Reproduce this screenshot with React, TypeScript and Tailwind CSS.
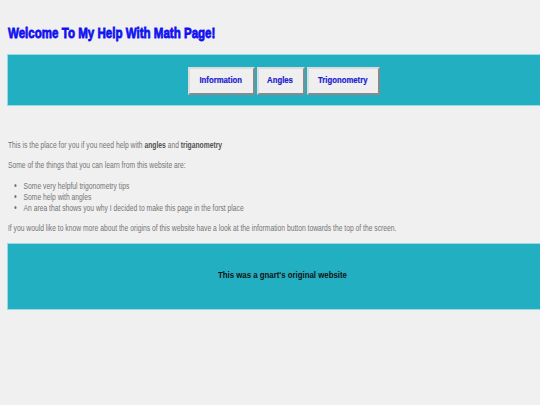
import React from 'react';

const navItems = [
  { label: 'Information', width: 'w-[67px]' },
  { label: 'Angles', width: 'w-[48px]' },
  { label: 'Trigonometry', width: 'w-[73px]' },
];

const App: React.FC = () => {
  return (
    <div className="min-h-[405px] bg-[#f0f0f0] pl-[7px] pt-[24px] font-['Liberation_Sans',sans-serif] overflow-hidden">
      {/* 标题 */}
      <h1 className="ml-px origin-left scale-x-[0.77] whitespace-nowrap text-[15px] leading-[18px] font-bold text-[#1010f0] [-webkit-text-stroke:0.8px_#1010f0]">
        Welcome To My Help With Math Page!
      </h1>

      {/* 导航栏 */}
      <div className="mt-[12px] h-[52px] bg-[#21afc1] border border-[#9adbe3] border-r-0 flex items-center justify-center pl-[19px]">
        <div className="flex gap-[2px] mt-[1px]">
          {navItems.map((item) => (
            <button
              key={item.label}
              className={`${item.width} h-[28px] flex items-center justify-center bg-[#efefef] border-2 border-t-[#dcdcdc] border-l-[#dcdcdc] border-r-[#8a8a8a] border-b-[#8a8a8a]`}
            >
              <span className="inline-block scale-x-[0.86] whitespace-nowrap text-[9px] font-bold text-[#1a1ad0] [-webkit-text-stroke:0.2px_#1a1ad0]">
                {item.label}
              </span>
            </button>
          ))}
        </div>
      </div>

      {/* 正文 */}
      <div className="mt-[33px] ml-px origin-left scale-x-[0.71] text-[9.5px] leading-[11px] text-[#747474]">
        <p>
          This is the place for you if you need help with <b className="text-[#505050]">angles</b> and{' '}
          <b className="text-[#505050]">triganometry</b>
        </p>
        <p className="mt-[9px]">Some of the things that you can learn from this website are:</p>
        <ul className="mt-[10px] pl-[22px] list-disc">
          <li>Some very helpful trigonometry tips</li>
          <li>Some help with angles</li>
          <li>An area that shows you why I decided to make this page in the forst place</li>
        </ul>
        <p className="mt-[9px] whitespace-nowrap">
          If you would like to know more about the origins of this website have a look at the information button towards the top of the screen.
        </p>
      </div>

      {/* 底部栏 */}
      <div className="mt-[10px] h-[67px] bg-[#21afc1] border border-[#9adbe3] border-r-0 flex items-center pl-[210px]">
        <p className="origin-left scale-x-[0.87] whitespace-nowrap text-[9px] font-bold text-[#111] mb-[2px]">
          This was a gnart's original website
        </p>
      </div>
    </div>
  );
};

export default App;
